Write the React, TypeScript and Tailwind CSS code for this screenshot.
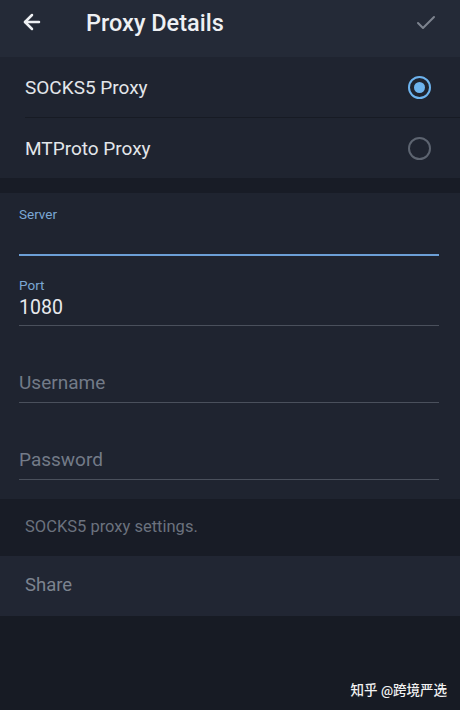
import { ArrowLeft, Check } from "lucide-react";

const font = { fontFamily: "Roboto, 'Noto Sans CJK SC', sans-serif" };

function RadioRow({ label, checked }: { label: string; checked?: boolean }) {
  return (
    <div className="flex h-[60px] items-center justify-between pl-[25px] pr-[29px]">
      <span className="pt-[2px] text-[19px] text-[#e3e6ea]">{label}</span>
      {checked ? (
        <span className="flex h-[23px] w-[23px] items-center justify-center rounded-full border-[2.5px] border-[#6db3ee]">
          <span className="h-[11px] w-[11px] rounded-full bg-[#6db3ee]" />
        </span>
      ) : (
        <span className="h-[23px] w-[23px] rounded-full border-2 border-[#5d6470]" />
      )}
    </div>
  );
}

function Field({ label, value, placeholder }: { label?: string; value?: string; placeholder?: string }) {
  return (
    <div className="pl-[19px] pr-[21px]">
      {label && <div className="text-[13.5px] leading-[16px] text-[#7ba7d4]">{label}</div>}
      {value ? (
        <div className="flex h-[32px] items-end pb-[6px] text-[19.5px] leading-[22px] text-[#e8eaee]">{value}</div>
      ) : (
        <div className="flex h-[34px] items-end pb-[8px] text-[19px] leading-[22px] text-[#737b88]">{placeholder}</div>
      )}
      <div className="h-px bg-[#4a505c]" />
    </div>
  );
}

export default function App() {
  return (
    <div style={font} className="flex h-[710px] w-[460px] flex-col overflow-hidden bg-[#171b24]">
      <div className="flex h-[57px] items-start bg-[#242a37] pl-[20px] pr-[20px] pt-[10px]">
        <ArrowLeft size={24} strokeWidth={2.5} className="text-[#eef0f3]" />
        <span className="ml-[42px] text-[23.5px] font-medium leading-[26px] text-[#eef0f3]">Proxy Details</span>
        <Check size={24} strokeWidth={2} className="ml-auto mr-[2px] mt-[1px] text-[#7d838e]" />
      </div>
      <div className="bg-[#1f2430]">
        <RadioRow label="SOCKS5 Proxy" checked />
        <div className="ml-[25px] h-px bg-[#171b24]" />
        <RadioRow label="MTProto Proxy" />
      </div>
      <div className="h-[15px] bg-[#181c26]" />
      <div className="bg-[#1f2430] pb-[19px] pt-[13px]">
        <div className="pl-[19px] pr-[21px]">
          <div className="text-[13.5px] leading-[16px] text-[#7ba7d4]">Server</div>
          <div className="h-[32px]" />
          <div className="h-[2px] bg-[#6c9fd6]" />
        </div>
        <div className="h-[21px]" />
        <Field label="Port" value="1080" />
        <div className="h-[42px]" />
        <Field placeholder="Username" />
        <div className="h-[42px]" />
        <Field placeholder="Password" />
      </div>
      <div className="flex h-[57px] items-center bg-[#181c26] px-[25px] text-[16.5px] text-[#6b727e]">
        SOCKS5 proxy settings.
      </div>
      <div className="flex h-[60px] items-center bg-[#212633] px-[25px] text-[18.5px] text-[#7c838f]">
        Share
      </div>
      <div className="flex flex-1 items-end justify-end pb-[10px] pr-[13px]">
        <span className="text-[13.5px] font-medium text-[#f2f2f2]">知乎 @跨境严选</span>
      </div>
    </div>
  );
}
